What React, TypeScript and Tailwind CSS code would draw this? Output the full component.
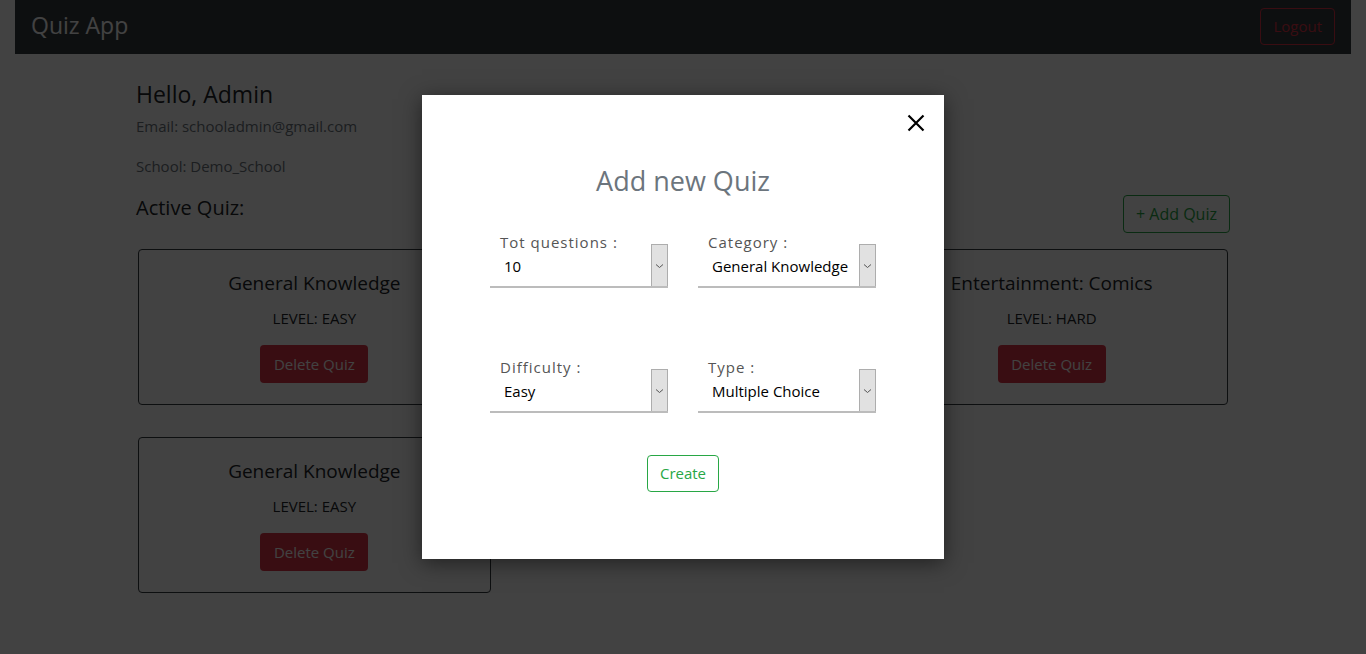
import React from "react";

function Card({ title, level }: { title: string; level: string }) {
  return (
    <div className="h-[156px] rounded-[4px] border border-[#343a40] flex flex-col items-center pt-[19px]">
      <div className="text-[19px] leading-[28px] text-[#212529]">{title}</div>
      <div className="mt-[11px] text-[15px] leading-[20px] text-[#212529]">{level}</div>
      <button className="mt-[17px] h-[38px] w-[108px] rounded-[4px] bg-[#dc3545] text-white text-[15px]">Delete Quiz</button>
    </div>
  );
}

function FakeSelect({ label, value }: { label: string; value: string }) {
  return (
    <div className="flex h-[56px] border-b-2 border-[#bcbcbc]">
      <div className="flex-1 flex flex-col pl-[10px]">
        <div className="text-[15px] leading-[18px] tracking-[1px] text-[#555] mt-[1px]">{label}</div>
        <div className="text-[15px] leading-[22px] text-black pl-[4px] mt-[4px]">{value}</div>
      </div>
      <div className="mt-[12px] w-[17px] h-[42px] bg-[#e1e1e1] border border-[#adadad] border-b-0 flex items-center justify-center">
        <svg width="9" height="6" viewBox="0 0 9 6"><path d="M1 1.5 L4.5 4.5 L8 1.5" stroke="#555" strokeWidth="1" fill="none" /></svg>
      </div>
    </div>
  );
}

export default function App() {
  return (
    <div className="relative w-[1366px] h-[654px] overflow-hidden bg-white font-['Open_Sans',sans-serif]">
      <div className="mx-[15px] h-[54px] bg-[#343a40] flex items-center justify-between px-[16px]">
        <div className="text-[23px] leading-[32px] text-white mt-[-4px]">Quiz App</div>
        <button className="h-[37px] px-[12px] rounded-[4px] border border-[#dc3545] text-[#dc3545] text-[15px] mt-[-1px]">Logout</button>
      </div>
      <div className="w-[1092px] mx-auto pt-[24px]">
        <div className="text-[23px] leading-[32px] text-[#212529] ml-[-1px]">Hello, Admin</div>
        <div className="mt-[6px] text-[15px] leading-[20px] text-[#6c757d] ml-[-1px]">Email: schooladmin@gmail.com</div>
        <div className="mt-[20px] text-[15px] leading-[20px] text-[#6c757d] ml-[-1px]">School: Demo_School</div>
        <div className="flex justify-between items-start mt-[19px]">
          <div className="text-[20px] leading-[28px] text-[#212529] ml-[-1px] mt-[-1px]">Active Quiz:</div>
          <button className="h-[38px] w-[107px] rounded-[4px] border border-[#28a745] text-[#28a745] text-[16px] mr-[-1px]">+ Add Quiz</button>
        </div>
        <div className="grid grid-cols-3 gap-x-[16px] gap-y-[32px] mt-[16px] w-[1090px] ml-[1px]">
          <Card title="General Knowledge" level="LEVEL: EASY" />
          <Card title="General Knowledge" level="LEVEL: EASY" />
          <Card title="Entertainment: Comics" level="LEVEL: HARD" />
          <Card title="General Knowledge" level="LEVEL: EASY" />
        </div>
      </div>
      <div className="absolute inset-0 bg-black/[0.74]" />
      <div className="absolute left-[422px] top-[95px] w-[522px] h-[464px] bg-white shadow-[0_4px_20px_rgba(0,0,0,0.5)] flex flex-col items-center">
        <button className="absolute right-[18px] top-[18px] w-[20px] h-[20px] flex items-center justify-center">
          <svg width="18" height="18" viewBox="0 0 18 18"><path d="M1.5 1.5 L16.5 16.5 M16.5 1.5 L1.5 16.5" stroke="#000" strokeWidth="2.2" /></svg>
        </button>
        <div className="mt-[68px] text-[27px] leading-[36px] text-[#6c757d]">Add new Quiz</div>
        <div className="mt-[33px] grid grid-cols-[178px_178px] gap-x-[30px] gap-y-[69px]">
          <FakeSelect label="Tot questions :" value="10" />
          <FakeSelect label="Category :" value="General Knowledge" />
          <FakeSelect label="Difficulty :" value="Easy" />
          <FakeSelect label="Type :" value="Multiple Choice" />
        </div>
        <button className="mt-[42px] h-[37px] w-[72px] rounded-[4px] border border-[#28a745] text-[#28a745] text-[15px]">Create</button>
      </div>
    </div>
  );
}
